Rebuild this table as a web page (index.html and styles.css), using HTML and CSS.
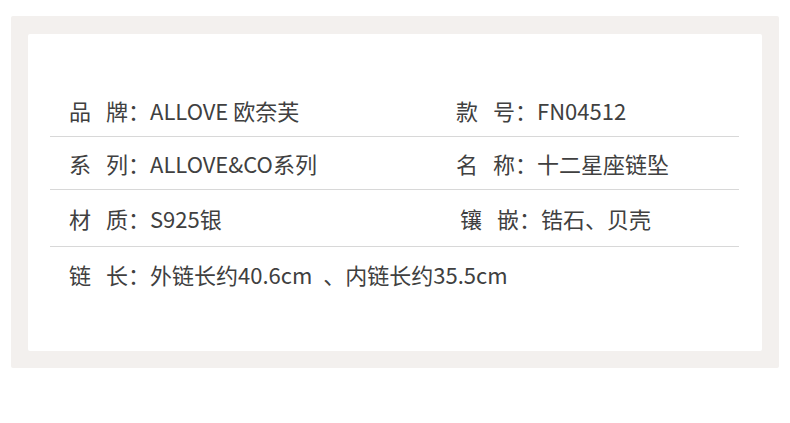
FILE: index.html
```html
<!DOCTYPE html>
<html lang="zh-CN">
<head>
<meta charset="utf-8">
<link rel="stylesheet" href="styles.css">
</head>
<body>
<div class="frame">
  <div class="card">
    <div class="table">
      <div class="row r1">
        <div class="cell left"><span class="label">品牌</span><span class="colon">：</span>ALLOVE 欧奈芙</div>
        <div class="cell right"><span class="label">款号</span><span class="colon">：</span>FN04512</div>
      </div>
      <div class="row r2">
        <div class="cell left"><span class="label">系列</span><span class="colon">：</span>ALLOVE&amp;CO系列</div>
        <div class="cell right"><span class="label">名称</span><span class="colon">：</span>十二星座链坠</div>
      </div>
      <div class="row r3">
        <div class="cell left"><span class="label">材质</span><span class="colon">：</span>S925银</div>
        <div class="cell right r3right"><span class="label">镶嵌</span><span class="colon">：</span>锆石、贝壳</div>
      </div>
      <div class="row r4 last">
        <div class="cell full"><span class="label">链长</span><span class="colon">：</span>外链长约40.6cm <span class="sep">、</span>内链长约35.5cm</div>
      </div>
    </div>
  </div>
</div>
</body>
</html>
```

FILE: styles.css
```css
html, body {
  margin: 0;
  padding: 0;
  background: #ffffff;
}
body {
  font-family: "Noto Sans CJK SC", "Noto Sans", sans-serif;
  color: #404040;
}
.frame {
  margin: 16px 11px 0 11px;
  width: 768px;
  box-sizing: border-box;
  background: #f3f0ee;
  padding: 18px 17px 17px 17px;
  border-radius: 2px;
}
.card {
  background: #ffffff;
  padding: 50px 23px 50px 22px;
  border-radius: 2px;
}
.table {
  display: flex;
  flex-direction: column;
}
.row {
  display: flex;
  align-items: center;
  border-bottom: 1px solid #d8d8d8;
  font-size: 22px;
  line-height: 30px;
}
.row.last {
  border-bottom: none;
}
.r1, .r2 { height: 52px; }
.r3 { height: 56px; }
.r4 { height: 54px; }
.cell {
  padding-left: 19px;
  white-space: nowrap;
}
.left {
  width: 368px;
}
.right {
  flex: 1;
}
.r3right {
  padding-left: 23px;
}
.label {
  display: inline-block;
  width: 59px;
  text-align: justify;
  text-align-last: justify;
}
.colon {
  display: inline-block;
  width: 22px;
}
.sep {
  margin-left: 6px;
}
```
